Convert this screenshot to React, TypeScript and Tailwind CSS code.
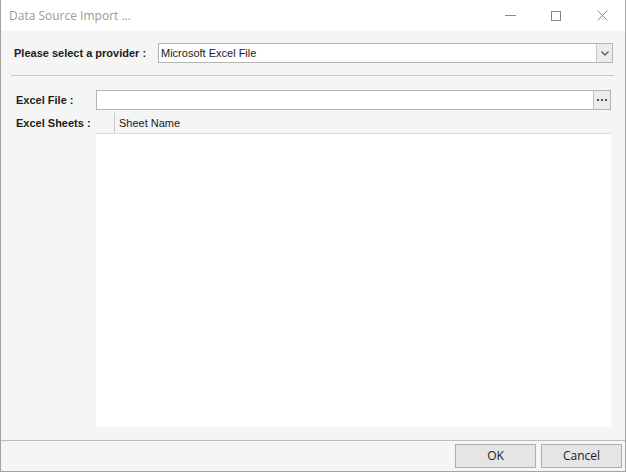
import React from "react";

const ui = { fontFamily: '"Open Sans", "Noto Sans", sans-serif' };
const tahoma = { fontFamily: '"Liberation Sans", Arial, sans-serif' };

export default function App() {
  return (
    <div className="w-[626px] h-[472px] flex flex-col border-x border-b border-[#a3a3a3] bg-[#f5f5f5] overflow-hidden" style={ui}>
      {/* title bar */}
      <div className="h-[31px] bg-white flex items-center shrink-0">
        <span className="ml-[8px] text-[12px] text-[#9a9a9a]">Data Source Import ...</span>
        <div className="ml-auto flex items-center h-full">
          <div className="w-[46px] h-full flex items-center justify-center">
            <div className="w-[11px] h-px bg-[#8a8a8a]" />
          </div>
          <div className="w-[46px] h-full flex items-center justify-center">
            <div className="w-[10px] h-[10px] border border-[#8a8a8a]" />
          </div>
          <div className="w-[46px] h-full flex items-center justify-center">
            <svg width="11" height="11" viewBox="0 0 11 11">
              <path d="M0.5 0.5 L10.5 10.5 M10.5 0.5 L0.5 10.5" stroke="#8a8a8a" strokeWidth="1" />
            </svg>
          </div>
        </div>
      </div>

      {/* body */}
      <div className="flex-1 flex flex-col text-[11px] text-[#202020] whitespace-nowrap" style={tahoma}>
        <div className="flex items-center mt-[12px] pl-[13px]">
          <span className="font-bold w-[144px]">Please select a provider :</span>
          <div className="w-[455px] h-[20px] bg-white border border-[#b4b4b4] flex items-center">
            <span className="pl-[2px] flex-1">Microsoft Excel File</span>
            <div className="w-[16px] h-full bg-[#ececec] border-l border-[#c4c4c4] flex items-center justify-center">
              <svg width="8" height="5" viewBox="0 0 8 5">
                <path d="M0.5 0.5 L4 4 L7.5 0.5" stroke="#606060" strokeWidth="1.4" fill="none" />
              </svg>
            </div>
          </div>
        </div>

        <div className="ml-[10px] w-[603px] h-px bg-[#c8c8c8] mt-[12px]" />

        <div className="flex items-center mt-[14px] pl-[15px]">
          <span className="font-bold w-[80px]">Excel File :</span>
          <div className="w-[515px] h-[20px] bg-white border border-[#b4b4b4] flex justify-end">
            <div className="w-[17px] h-full bg-[#ececec] border-l border-[#c4c4c4] flex items-center justify-center gap-[2px]">
              <div className="w-[2px] h-[2px] bg-[#505050]" />
              <div className="w-[2px] h-[2px] bg-[#505050]" />
              <div className="w-[2px] h-[2px] bg-[#505050]" />
            </div>
          </div>
        </div>

        <div className="flex mt-[3px] pl-[15px]">
          <span className="font-bold w-[80px] pt-[2px]">Excel Sheets :</span>
          <div className="w-[515px] h-[314px] flex flex-col">
            <div className="h-[21px] flex border-b border-[#dcdcdc] shrink-0">
              <div className="w-[19px] h-full border-r border-[#c8c8c8]" />
              <span className="pl-[4px] flex items-center">Sheet Name</span>
            </div>
            <div className="flex-1 bg-white" />
          </div>
        </div>

        <div className="mt-auto h-[31px] border-t border-[#bdbdbd] flex items-center justify-end pr-[3px] gap-[5px]" style={ui}>
          <button className="w-[81px] h-[24px] bg-[#e5e5e5] border border-[#adadad] text-[12px] text-[#202020]">OK</button>
          <button className="w-[81px] h-[24px] bg-[#e5e5e5] border border-[#adadad] text-[12px] text-[#202020]">Cancel</button>
        </div>
      </div>
    </div>
  );
}
